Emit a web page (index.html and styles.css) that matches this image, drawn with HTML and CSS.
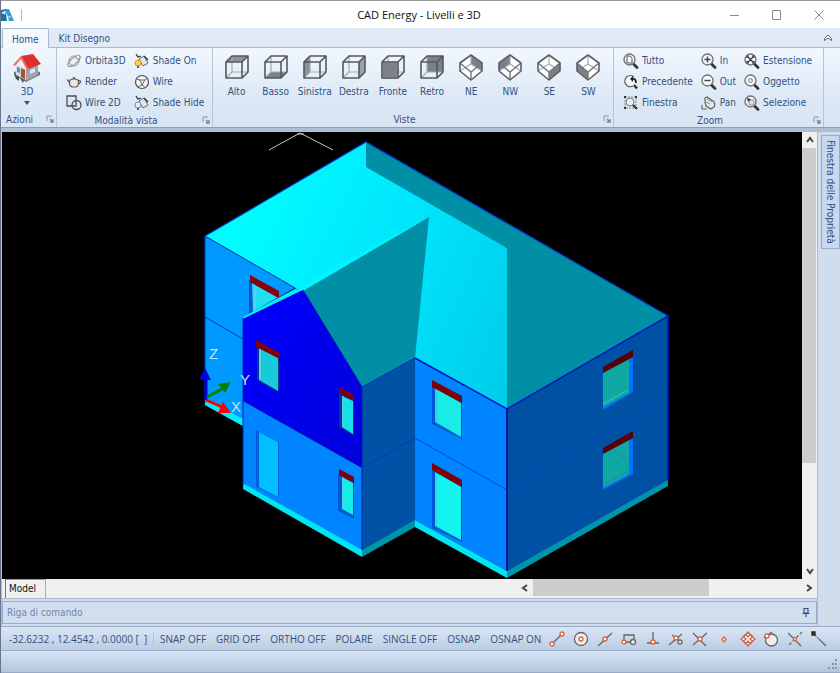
FILE: index.html
```html
<!DOCTYPE html>
<html lang="it">
<head>
    <meta charset="UTF-8">
    <meta name="viewport" content="width=device-width, initial-scale=1.0">
    <title>CAD Energy - Livelli e 3D</title>
    <link rel="stylesheet" href="styles.css">
</head>
<body>

    <!-- Shared icon shapes -->
    <svg class="defs" width="0" height="0" aria-hidden="true">
        <symbol id="cube" viewBox="0 0 26 27">
            <path d="M8 2v16l-6 6M8 18h16" fill="none" stroke="#a4aab2" stroke-width="1.2"/>
            <path d="M2 8h16v16H2zM2 8l6-6h16l-6 6M24 2v16l-6 6" fill="none" stroke="#55595f" stroke-width="1.6" stroke-linejoin="round"/>
        </symbol>
        <symbol id="iso" viewBox="0 0 26 27">
            <path d="M2 9l11-8 11 8v8l-11 9-11-9z" fill="#fff"/>
        </symbol>
        <symbol id="iso-back" viewBox="0 0 26 27">
            <path d="M13 1v9L2 17M13 10l11 7" fill="none" stroke="#a4a8ae" stroke-width="1.200"/>
        </symbol>
        <symbol id="iso-lines" viewBox="0 0 26 27">
            <path d="M2 9l11 9 11-9M13 18v8" fill="none" stroke="#74787e" stroke-width="1.400"/>
            <path d="M2 9l11-8 11 8v8l-11 9-11-9z" fill="none" stroke="#5c6066" stroke-width="1.600" stroke-linejoin="round"/>
        </symbol>
        <symbol id="lens" viewBox="0 0 16 16">
            <path d="M10.500 11l3.500 3.500" stroke="#33363b" stroke-width="2.800" stroke-linecap="round"/>
            <circle cx="6.500" cy="6.500" r="5.500" fill="#f6f8fa" stroke="#6a6e74" stroke-width="1.300"/>
        </symbol>
        <symbol id="launcher" viewBox="0 0 8 8">
            <path d="M1 6V1h5" fill="none" stroke="#8695ae"/>
            <path d="M4 4l3 3M7 4v3H4" fill="none" stroke="#75849d" stroke-width="1.300"/>
        </symbol>
    </svg>

    <div class="window">

        <!-- Title bar -->
        <header class="title-bar">
            <svg class="logo" viewBox="0 0 14 14">
                <path d="M0 13V2l5-1v4l1 8z" fill="#1c6fa8"/>
                <path d="M5 1h3l5 12H8L6 6H4z" fill="#2fa0d8"/>
                <path d="M1 5l3-2v3zM7 9h3" stroke="#d8effa" fill="#8ed0ee"/>
            </svg>
            <h1>CAD Energy - Livelli e 3D</h1>
            <div class="window-buttons">
                <button aria-label="Riduci"><svg viewBox="0 0 10 10"><path d="M0 5.500h9"/></svg></button>
                <button aria-label="Ingrandisci"><svg viewBox="0 0 10 10"><path d="M.5.5h8v9h-8z"/></svg></button>
                <button aria-label="Chiudi"><svg viewBox="0 0 10 10"><path d="M.5.5l9 9M9.500.5l-9 9"/></svg></button>
            </div>
        </header>

        <!-- Ribbon tabs -->
        <nav class="tabs">
            <button class="tab active">Home</button>
            <button class="tab">Kit Disegno</button>
            <button class="collapse" aria-label="Comprimi"><svg viewBox="0 0 8 8"><path d="M.5 4.500L4 1l3.500 3.500v2L4 4 .5 6.500z"/></svg></button>
        </nav>

        <!-- Ribbon -->
        <div class="ribbon">
            <section class="group group-azioni">
                <div class="group-body">
                    <button class="big">
                        <svg class="house-icon" viewBox="0 0 30 30">
                            <path d="M2 22l12 7 14-7v-3L14 16 2 19z" fill="#6f777d"/>
                            <path d="M4 11l10 5v11L4 22z" fill="#d8dbe0"/>
                            <path d="M14 16l12-5v11l-12 6z" fill="#9fa5ae"/>
                            <path d="M4 12L9 5l6 11z" fill="#eceff2"/>
                            <path d="M9 3l12-2 8 10-13 5z" fill="#e0302c"/>
                            <path d="M9 3L1 12l2 1 6-7 6 11 2-1z" fill="#f46a5f"/>
                            <path d="M9 15l4 2v9l-4-2z" fill="#a9552c"/>
                            <path d="M5 14l3 1v5l-3-1z" fill="#5d8eb8"/>
                            <path d="M18 17l5-2v4l-5 2z" fill="#d9e6f0"/>
                            <path d="M2 21l5 3v4l-3-2zM8 25l4 2-1 3z" fill="#474d51"/>
                        </svg>
                        <span>3D</span>
                        <svg class="arrow" viewBox="0 0 6 4"><path d="M0 0h6L3 4z" fill="#34507e"/></svg>
                    </button>
                </div>
                <footer><span>Azioni</span><svg class="launcher"><use href="#launcher"/></svg></footer>
            </section>

            <section class="group group-modalita">
                <div class="group-body columns">
                    <div class="column">
                        <button><svg viewBox="0 0 16 16"><circle cx="8" cy="8" r="5" fill="#eee" stroke="#999"/><ellipse cx="8" cy="8" rx="7.500" ry="3" transform="rotate(-40 8 8)" fill="none" stroke="#8a8d92"/><circle cx="12" cy="4" r="2" fill="#f8f8f8" stroke="#999"/></svg>Orbita3D</button>
                        <button><svg viewBox="0 0 16 16"><path d="M4 6q4-2 8 0 2 5-2 7H6Q2 11 4 6zM4 9L1 5.500M12 7q3-1 2.500 1T12 10M7 4.500q1-2 2 0" fill="#ece8df" stroke="#5b5a58" stroke-width="1.200"/></svg>Render</button>
                        <button><svg viewBox="0 0 16 16"><path d="M1 1h9v10H1z" fill="none" stroke="#4b4e53" stroke-width="1.300"/><circle cx="10.500" cy="10" r="4.500" fill="none" stroke="#4b4e53" stroke-width="1.300"/></svg>Wire 2D</button>
                    </div>
                    <div class="column">
                        <button><svg viewBox="0 0 16 16"><path d="M5 6l5-3 4 7-5 3z" fill="#e4e6e8" stroke="#66696e"/><path d="M2 1l2 3 3-1M10 3l4 4" fill="none" stroke="#333" stroke-width="1.300"/><circle cx="4" cy="10" r="3" fill="#ffd23c" stroke="#d69a20"/><path d="M3 13h2v2H3z" fill="#556"/></svg>Shade On</button>
                        <button><svg viewBox="0 0 16 16"><circle cx="8" cy="8" r="6.500" fill="#f4f5f6" stroke="#4b4e53" stroke-width="1.200"/><path d="M2 5l4 1 2 5 3-5 3-2M3 13l5-2 4 3M6 6h5" fill="none" stroke="#66696e"/></svg>Wire</button>
                        <button><svg viewBox="0 0 16 16"><path d="M5 6l5-3 4 7-5 3z" fill="#e4e6e8" stroke="#66696e"/><path d="M2 1l2 3 3-1M10 3l4 4" fill="none" stroke="#333" stroke-width="1.300"/><circle cx="4" cy="10" r="3" fill="#e2f0fa" stroke="#5d93c0"/><path d="M3 13h2v2H3z" fill="#368"/></svg>Shade Hide</button>
                    </div>
                </div>
                <footer><span>Modalità vista</span><svg class="launcher"><use href="#launcher"/></svg></footer>
            </section>

            <section class="group group-viste">
                <div class="group-body views">
                    <button class="view"><svg viewBox="0 0 26 27"><path d="M2 8l6-6h16l-6 6z" fill="#8c9197"/><use href="#cube"/></svg>Alto</button>
                    <button class="view"><svg viewBox="0 0 26 27"><path d="M2 24l6-6h16l-6 6z" fill="#7c8187"/><use href="#cube"/></svg>Basso</button>
                    <button class="view"><svg viewBox="0 0 26 27"><path d="M2 8l6-6v16l-6 6z" fill="#8c9197"/><use href="#cube"/></svg>Sinistra</button>
                    <button class="view"><svg viewBox="0 0 26 27"><path d="M18 8l6-6v16l-6 6z" fill="#9ca1a7"/><use href="#cube"/></svg>Destra</button>
                    <button class="view"><svg viewBox="0 0 26 27"><use href="#cube"/><path d="M2 8h16v16H2z" fill="#7c8187" stroke="#5c6066"/></svg>Fronte</button>
                    <button class="view"><svg viewBox="0 0 26 27"><path d="M8 2h16v16H8z" fill="#7c8187"/><use href="#cube"/></svg>Retro</button>
                    <button class="view"><svg viewBox="0 0 26 27"><use href="#iso"/><path d="M13 1l11 8v8l-11-7z" fill="#7c8187"/><use href="#iso-back"/><use href="#iso-lines"/></svg>NE</button>
                    <button class="view"><svg viewBox="0 0 26 27"><use href="#iso"/><path d="M13 1L2 9v8l11-7z" fill="#7c8187"/><use href="#iso-back"/><use href="#iso-lines"/></svg>NW</button>
                    <button class="view"><svg viewBox="0 0 26 27"><use href="#iso"/><use href="#iso-back"/><path d="M24 9l-11 9v8l11-9z" fill="#7c8187"/><use href="#iso-lines"/></svg>SE</button>
                    <button class="view"><svg viewBox="0 0 26 27"><use href="#iso"/><use href="#iso-back"/><path d="M2 9l11 9v8L2 17z" fill="#7c8187"/><use href="#iso-lines"/></svg>SW</button>
                </div>
                <footer><span>Viste</span><svg class="launcher"><use href="#launcher"/></svg></footer>
            </section>

            <section class="group group-zoom">
                <div class="group-body columns">
                    <div class="column">
                        <button><svg viewBox="0 0 16 16"><use href="#lens"/><path d="M4 3h3l2 2v5H4z" fill="#fff" stroke="#555"/></svg>Tutto</button>
                        <button><svg viewBox="0 0 16 16"><path d="M10 12A5.500 5.500 0 1 1 11 3" fill="#f6f8fa" stroke="#55595f" stroke-width="1.300"/><path d="M11 11l3 3.500" stroke="#33363b" stroke-width="2.500"/><path d="M9 5q4-1 4 4" fill="none" stroke="#222" stroke-width="1.800"/><path d="M10 2v6L7 5z" fill="#222"/></svg>Precedente</button>
                        <button><svg viewBox="0 0 16 16"><path d="M2 2h11v11H2z" fill="none" stroke="#888" stroke-dasharray="2 1"/><circle cx="7" cy="7" r="4" fill="#eceef0" stroke="#777"/><path d="M10 10l4 4" stroke="#333" stroke-width="2.200"/><path d="M1 1h2v2H1zM12 1h2v2h-2zM1 12h2v2H1z" fill="#333"/></svg>Finestra</button>
                    </div>
                    <div class="column">
                        <button><svg viewBox="0 0 16 16"><use href="#lens"/><path d="M3.500 6.500h6M6.500 3.500v6" stroke="#444" stroke-width="1.400"/></svg>In</button>
                        <button><svg viewBox="0 0 16 16"><use href="#lens"/><path d="M3.500 6.500h6" stroke="#444" stroke-width="1.400"/></svg>Out</button>
                        <button><svg viewBox="0 0 16 16"><path d="M4 7V3l2-1 6 4q3 3 1 6l-3 2-5-3zM1 10v4h5" fill="#e6e7e8" stroke="#606369" stroke-width="1.200"/><path d="M5 7l4 2M6 4l5 3" stroke="#888"/></svg>Pan</button>
                    </div>
                    <div class="column">
                        <button><svg viewBox="0 0 16 16"><use href="#lens"/><path d="M3 5V3h2M8 3h2v2M10 8v2H8M5 10H3V8M4 4l5 5M9 4L4 9" fill="none" stroke="#333" stroke-width="1.200"/></svg>Estensione</button>
                        <button><svg viewBox="0 0 16 16"><use href="#lens"/><circle cx="6.500" cy="6.500" r="2" fill="#ddd" stroke="#888"/></svg>Oggetto</button>
                        <button><svg viewBox="0 0 16 16"><use href="#lens"/><path d="M5 5h5v5H5z" fill="#ddd" stroke="#999"/><path d="M3 3l4 1-3 3z" fill="#333"/></svg>Selezione</button>
                    </div>
                </div>
                <footer><span>Zoom</span><svg class="launcher"><use href="#launcher"/></svg></footer>
            </section>
        </div>

        <!-- Drawing area -->
        <div class="workspace">
            <main class="main">
                <div class="viewport">
                    <svg class="model" viewBox="2 132 800 447" preserveAspectRatio="xMinYMin meet" role="img" aria-label="Modello 3D">
                        <defs>
                            <linearGradient id="roof" gradientUnits="userSpaceOnUse" x1="240" y1="230" x2="520" y2="360">
                                <stop offset="0" stop-color="#00fcff"/>
                                <stop offset=".5" stop-color="#00e4fc"/>
                                <stop offset="1" stop-color="#00cdea"/>
                            </linearGradient>
                            <linearGradient id="gable" x1="0" y1="0" x2="1" y2="1">
                                <stop offset="0" stop-color="#0000ff"/>
                                <stop offset="1" stop-color="#0000d8"/>
                            </linearGradient>
                        </defs>

                        <!-- roof -->
                        <path d="M205 236L366 142 507 248V409L415 358 303 292 295 288z" fill="url(#roof)"/>
                        <path d="M366 142L668 316 507 409V248L366 167z" fill="#008fa5"/>
                        <path d="M429 217L303 290 362 387 415 358z" fill="#008fa5"/>
                        <path d="M205 236L366 142 668 316" fill="none" stroke="#003cd0" stroke-width="1.200"/>

                        <!-- left wing -->
                        <path d="M205 236L295 288 243 318V426L205 405z" fill="#0099ff"/>
                        <path d="M205 398L243 419V426L205 405z" fill="#00efff"/>
                        <path d="M249 280L279 298 253 313 249 316z" fill="#0050d8"/>
                        <path d="M252 283L278 298 253 313z" fill="#20dff0"/>
                        <path d="M255 287V310" stroke="#8cc8e8"/>
                        <path d="M250 275L279 291V298L250 282z" fill="#8a0008"/>
                        <path d="M205 403V236L295 288 255 311M205 317L243 339" fill="none" stroke="#0038c0"/>
                        <path d="M295 289L303 290 243 319V317z" fill="#00f0ff"/>
                        <path d="M295 288L429 217 303 291z" fill="#00f4ff"/>

                        <!-- front gable -->
                        <path d="M243 319L303 290 362 387V468L243 401z" fill="url(#gable)"/>
                        <path d="M243 401L362 468V551L243 483z" fill="#0084ff"/>
                        <path d="M243 483L362 550V557L243 489z" fill="#00e4f4"/>
                        <path d="M257 346L279 358V392L257 380z" fill="#003898"/>
                        <path d="M259 347L278 358V391L259 380z" fill="#16cada"/>
                        <path d="M260 349V379" stroke="#9adff0"/>
                        <path d="M256 340L280 353V359L256 347z" fill="#800008"/>
                        <path d="M339 392L354 401V436L339 427z" fill="#003898"/>
                        <path d="M342 396L353 401V434L342 427z" fill="#18e0e4"/>
                        <path d="M343 396V427" stroke="#80b8e0"/>
                        <path d="M339 387L354 395V401L339 393z" fill="#800008"/>
                        <path d="M338 474L354 483V519L338 511z" fill="#0058d8"/>
                        <path d="M342 477L353 483V515L342 509z" fill="#18ece8"/>
                        <path d="M343 477V509" stroke="#80b8e0"/>
                        <path d="M339 469L354 477V483L339 475z" fill="#800008"/>
                        <path d="M256 430L279 442V498L256 487z" fill="#0060e0"/>
                        <path d="M259 432L278 442V497L259 487z" fill="#00c0ff"/>

                        <!-- side wall -->
                        <path d="M362 387L415 358V521L362 550z" fill="#0052a6"/>
                        <path d="M362 550L415 520V527L362 557z" fill="#0094aa"/>
                        <path d="M362 468L415 438M362 387L415 358" stroke="#0038c0"/>
                        <path d="M303 290L362 387V550M243 318V486" fill="none" stroke="#0020b0"/>

                        <!-- right wing -->
                        <path d="M415 358L507 409V571L415 520z" fill="#0084ff"/>
                        <path d="M415 520L507 571V578L415 527z" fill="#00e4f4"/>
                        <path d="M507 409L668 316V481L507 572z" fill="#0050a4"/>
                        <path d="M507 571L668 480V486L507 578z" fill="#0094aa"/>
                        <path d="M415 438L507 490 668 398" fill="none" stroke="#0048d0"/>
                        <path d="M415 358L507 409 668 316V480" fill="none" stroke="#0018c0" stroke-width="1.500"/>
                        <path d="M507 409V571" stroke="#0010a0" stroke-width="2"/>
                        <path d="M432 386L462 402V439L432 424z" fill="#0058d8"/>
                        <path d="M435 388L461 403V437L435 422z" fill="#18ece4"/>
                        <path d="M432 380L462 396V403L432 387z" fill="#800008"/>
                        <path d="M432 469L462 486V542L432 528z" fill="#0058d8"/>
                        <path d="M435 472L461 487V540L435 526z" fill="#14f4ee"/>
                        <path d="M436 473V526M436 389V422" stroke="#50b0e0"/>
                        <path d="M432 463L462 480V487L432 470z" fill="#800008"/>
                        <path d="M603 373L633 357V392L603 410z" fill="#0074ff"/>
                        <path d="M603 373L629 359V393L603 407z" fill="#10a8a2"/>
                        <path d="M603 404L628 390" stroke="#3cc4d0"/>
                        <path d="M603 367L633 350V357L603 373z" fill="#580008"/>
                        <path d="M603 454L633 438V474L603 490z" fill="#0074ff"/>
                        <path d="M603 454L629 440V474L603 488z" fill="#10a8a2"/>
                        <path d="M611 450L627 459M603 485L628 471" stroke="#2c80a8"/>
                        <path d="M603 448L633 431V438L603 454z" fill="#580008"/>

                        <!-- axes -->
                        <path d="M269 150L300 133 333 150M297 134h7" fill="none" stroke="#c8c8c8"/>
                        <path d="M206 400V378" stroke="#0000e0" stroke-width="3"/>
                        <path d="M205 368L211 380H199z" fill="#0000e0"/>
                        <path d="M207 397L222 389" stroke="#008000" stroke-width="3"/>
                        <path d="M231 382L225 393 218 384z" fill="#008000"/>
                        <path d="M206 400L222 407" stroke="#f00" stroke-width="3"/>
                        <path d="M231 413L218 413 223 402z" fill="#f00"/>
                        <g class="axis-labels">
                            <text x="209" y="359">Z</text>
                            <text x="240" y="385">Y</text>
                            <text x="231" y="412">X</text>
                        </g>
                    </svg>
                    <div class="scroll vertical">
                        <button aria-label="Su"><svg viewBox="0 0 8 8"><path d="M1 6l3-4 3 4"/></svg></button>
                        <div class="thumb"></div>
                        <button aria-label="Giù"><svg viewBox="0 0 8 8"><path d="M1 2l3 4 3-4"/></svg></button>
                    </div>
                </div>
                <div class="sheet-bar">
                    <button class="sheet">Model</button>
                    <div class="scroll horizontal">
                        <button aria-label="Sinistra"><svg viewBox="0 0 8 8"><path d="M6 1L2 4l4 3"/></svg></button>
                        <div class="thumb"></div>
                        <button aria-label="Destra"><svg viewBox="0 0 8 8"><path d="M2 1l4 3-4 3"/></svg></button>
                    </div>
                </div>
                <div class="command">
                    <input type="text" placeholder="Riga di comando" aria-label="Riga di comando">
                    <button aria-label="Blocca"><svg viewBox="0 0 8 9"><path d="M2 .5h4V5H2zM.5 5.500h7M4 6v3" fill="none" stroke="#34507e" stroke-width="1.200"/></svg></button>
                </div>
            </main>
            <aside class="dock">
                <button>Finestra delle Proprietà</button>
            </aside>
        </div>

        <!-- Status bar -->
        <div class="status">
            <span class="coords">-32.6232 , 12.4542 , 0.0000 [&nbsp; ]</span>
            <div class="modes">
                <button>SNAP OFF</button>
                <button>GRID OFF</button>
                <button>ORTHO OFF</button>
                <button>POLARE</button>
                <button>SINGLE OFF</button>
                <button>OSNAP</button>
                <button>OSNAP ON</button>
            </div>
            <div class="snaps">
                <button aria-label="Fine"><svg viewBox="0 0 16 16"><path class="ink" d="M4 12l8-8"/><circle cx="3" cy="13" r="2"/><circle cx="13" cy="3" r="2"/></svg></button>
                <button aria-label="Centro"><svg viewBox="0 0 16 16"><circle class="ink" cx="8" cy="8" r="6.500"/><circle cx="8" cy="8" r="2"/></svg></button>
                <button aria-label="Medio"><svg viewBox="0 0 16 16"><path class="ink" d="M1 15L15 2"/><circle cx="8" cy="8" r="2"/></svg></button>
                <button aria-label="Inserimento"><svg viewBox="0 0 16 16"><path class="ink" d="M3 4h10v7H3z"/><circle class="ink" cx="12" cy="11" r="2.500"/><circle cx="3" cy="11" r="2"/></svg></button>
                <button aria-label="Perpendicolare"><svg viewBox="0 0 16 16"><path class="ink" d="M8 1v10M2 12h12"/><circle cx="8" cy="11" r="2"/></svg></button>
                <button aria-label="Vicino"><svg viewBox="0 0 16 16"><path class="ink" d="M1 14L14 3M4 4l8 6"/><circle class="ink" cx="12" cy="11" r="2"/><circle cx="8" cy="7" r="2"/></svg></button>
                <button aria-label="Intersezione"><svg viewBox="0 0 16 16"><path class="ink" d="M1 2l13 13M15 2L1 14"/><circle cx="8" cy="8" r="2"/></svg></button>
                <button aria-label="Nodo"><svg viewBox="0 0 16 16"><path class="mark" d="M8 6l2 2.500L8 11 6 8.500z"/></svg></button>
                <button aria-label="Quadrante"><svg viewBox="0 0 16 16"><circle class="ink" cx="8" cy="8" r="5"/><path class="mark" d="M8 1l2 2.500L8 6 6 3.500zM8 10l2 2.500L8 15l-2-2.500zM3.500 6L6 8l-2.500 2L1 8zM12.500 6L15 8l-2.500 2L10 8z"/></svg></button>
                <button aria-label="Tangente"><svg viewBox="0 0 16 16"><circle class="ink" cx="8.500" cy="9" r="6"/><path class="ink" d="M1 7l8-6"/><circle cx="4" cy="5" r="2"/></svg></button>
                <button aria-label="Intersezione apparente"><svg viewBox="0 0 16 16"><path class="ink" d="M1 2l13 13"/><path class="ink" stroke-dasharray="3 2" d="M15 1L1 15"/><circle cx="8" cy="8" r="1.500"/></svg></button>
                <button aria-label="Estensione"><svg viewBox="0 0 16 16"><path class="ink" stroke-dasharray="2 1" d="M4 4l4 4"/><path class="ink" d="M8 8l7 7"/><path d="M1 1h3v3H1z" fill="#8a1c24" stroke="#321"/></svg></button>
            </div>
        </div>
        <div class="bottom-bar">
            <svg viewBox="0 0 10 10"><path d="M8 0h2v2H8zM5 4h2v2H5zM8 4h2v2H8zM1 8h2v2H1zM5 8h2v2H5zM8 8h2v2H8z" fill="#8194b0"/></svg>
        </div>
    </div>

</body>
</html>
```

FILE: styles.css
```css
/* Base */
* {
    box-sizing: border-box;
}

body {
    margin: 0;
    font-family: "DejaVu Sans Condensed", "Noto Sans", sans-serif;
    font-size: 10px;
    color: #34507e;
}

button {
    font: inherit;
    color: inherit;
    background: none;
    border: none;
    padding: 0;
    margin: 0;
    display: flex;
    align-items: center;
    justify-content: center;
    white-space: nowrap;
}

svg {
    flex: none;
}

.defs {
    display: none;
}

.window {
    display: flex;
    flex-direction: column;
    height: 100vh;
    border-left: 1px solid #66758a;
    background-color: #cfdded;
    overflow: hidden;
}

/* Title bar */
.title-bar {
    display: flex;
    align-items: center;
    height: 28px;
    border-top: 1px solid #9a9a9a;
    background-color: #fff;
}

.logo {
    width: 14px;
    height: 14px;
}

.title-bar h1 {
    flex: 1;
    margin: 0 0 0 6px;
    border-left: 1px solid #bbb;
    padding-left: 102px;
    font-family: "Open Sans", sans-serif;
    font-size: 11px;
    line-height: 12px;
    font-weight: normal;
    color: #111;
    text-align: center;
}

.window-buttons {
    display: flex;
}

.window-buttons button {
    width: 42px;
}

.window-buttons svg {
    width: 10px;
    height: 10px;
    fill: none;
    stroke: #888;
}

/* Ribbon tabs */
.tabs {
    display: flex;
    height: 20px;
    padding-left: 1px;
    background-color: #dfeaf6;
    border-bottom: 1px solid #a9b9d0;
}

.tab {
    padding: 2px 10px 0;
}

.tab.active {
    height: 20px;
    padding: 2px 9px 0;
    background-color: #f3f8fe;
    border: 1px solid #a9b9d0;
    border-bottom: none;
    border-radius: 2px 2px 0 0;
}

.collapse {
    margin-left: auto;
    padding-right: 8px;
}

.collapse svg {
    width: 8px;
    height: 8px;
    fill: #fff;
    stroke: #55657e;
}

/* Ribbon */
.ribbon {
    display: flex;
    height: 80px;
    background: linear-gradient(#f1f7fe, #dbe7f5 70%, #d8e5f4);
    border-bottom: 1px solid #8d9eb5;
}

.group {
    display: flex;
    flex-direction: column;
    border-right: 1px solid #b5c3d8;
}

.group-azioni {
    width: 56px;
}

.group-modalita {
    width: 156px;
}

.group-viste {
    width: 401px;
}

.group-zoom {
    width: 210px;
}

.group-body {
    flex: 1;
    padding-top: 2px;
}

.group footer {
    display: flex;
    align-items: center;
    height: 16px;
    padding: 0 2px 0 5px;
}

.group footer span {
    flex: 1;
    padding-right: 12px;
    text-align: center;
}

.group-azioni footer span {
    padding-right: 0;
    text-align: left;
}

.launcher {
    width: 8px;
    height: 8px;
}

.columns {
    display: flex;
    gap: 8px;
    padding-left: 9px;
}

.column button {
    height: 21px;
    gap: 3px;
    justify-content: flex-start;
}

.column svg {
    width: 16px;
    height: 16px;
}

.big {
    flex-direction: column;
    width: 52px;
    gap: 3px;
    line-height: 12px;
}

.house-icon {
    width: 30px;
    height: 30px;
    margin-top: 3px;
}

.arrow {
    width: 6px;
    height: 4px;
}

.views {
    display: grid;
    grid-template-columns: repeat(10, 1fr);
    padding: 6px 5px 0 4px;
    align-content: start;
}

.view {
    flex-direction: column;
    gap: 5px;
    line-height: 12px;
}

.view svg {
    width: 26px;
    height: 27px;
}

/* Workspace */
.workspace {
    display: flex;
    flex: 1;
    min-height: 0;
    border-top: 4px solid #aebfd4;
    border-left: 1px solid #aebfd4;
}

.main {
    flex: 1;
    display: flex;
    flex-direction: column;
    min-width: 0;
}

.viewport {
    flex: 1;
    display: flex;
    min-height: 0;
    background-color: #000;
}

.model {
    flex: 1;
    min-width: 0;
    height: 100%;
}

.axis-labels {
    font-family: "Liberation Sans", sans-serif;
    font-size: 15px;
    fill: #bfe4ff;
}

.scroll {
    display: flex;
    background-color: #f0f0f0;
}

.scroll svg {
    width: 8px;
    height: 8px;
    fill: none;
    stroke: #444;
    stroke-width: 2;
}

.thumb {
    background-color: #cdcdcd;
}

.vertical {
    flex-direction: column;
    width: 15px;
}

.vertical button {
    height: 16px;
}

.vertical .thumb {
    flex: 1;
    margin: 0 1px 100px 0;
}

.sheet-bar {
    display: flex;
    justify-content: space-between;
    height: 20px;
    background-color: #f0f0f0;
    border-bottom: 1px solid #a9b9d0;
}

.sheet {
    width: 44px;
    padding-left: 2px;
    padding-right: 4px;
    border-right: 1px solid #aaa;
    box-shadow: inset 3px 0 #f0f0f0, inset 4px 0 #777, inset 0 1px #999;
    color: #111;
}

.horizontal {
    width: 300px;
    padding-bottom: 2px;
}

.horizontal button {
    width: 16px;
}

.horizontal .thumb {
    flex: 1;
    margin-right: 92px;
}

.command {
    display: flex;
    height: 23px;
    margin: 2px 0;
    border: 1px solid #98abc8;
    background-color: #d0deef;
}

.command input {
    flex: 1;
    font: inherit;
    background: none;
    border: none;
    padding: 0 4px;
    outline: none;
}

.command input::placeholder {
    color: #7485a8;
    opacity: 1;
}

.command button {
    width: 20px;
}

.command svg {
    width: 8px;
    height: 9px;
}

/* Property dock */
.dock {
    width: 23px;
    padding: 3px 0 0 3px;
    border-left: 1px solid #a9b9d0;
}

.dock button {
    width: 19px;
    padding: 4px 0;
    writing-mode: vertical-rl;
    border: 1px solid #98abc8;
    background-color: #c6d9f1;
}

/* Status bars */
.status {
    display: flex;
    align-items: center;
    height: 25px;
    padding: 0 13px 0 8px;
    border-top: 1px solid #98abc8;
    border-bottom: 1px solid #98abc8;
    background: linear-gradient(#d9e6f5, #bccde2);
    font-family: "Open Sans", sans-serif;
    line-height: 14px;
}

.coords {
    width: 145px;
    border-right: 1px solid #b4c3d8;
    white-space: nowrap;
}

.modes {
    display: flex;
    gap: 10px;
    padding: 0 8px 0 6px;
}

.snaps {
    flex: 1;
    display: flex;
    justify-content: space-between;
}

.snaps svg {
    width: 16px;
    height: 16px;
    fill: #fff;
    stroke: #e0603c;
    stroke-width: 1.300;
}

.snaps .ink {
    fill: none;
    stroke: #64666a;
}

.snaps circle.ink {
    fill: #f1efec;
}

.bottom-bar {
    display: flex;
    justify-content: flex-end;
    align-items: flex-end;
    height: 22px;
    padding: 3px;
    background: linear-gradient(#d6e4f4, #b3c6dc);
    border-bottom: 1px solid #98abc8;
}

.bottom-bar svg {
    width: 10px;
    height: 10px;
}
```
